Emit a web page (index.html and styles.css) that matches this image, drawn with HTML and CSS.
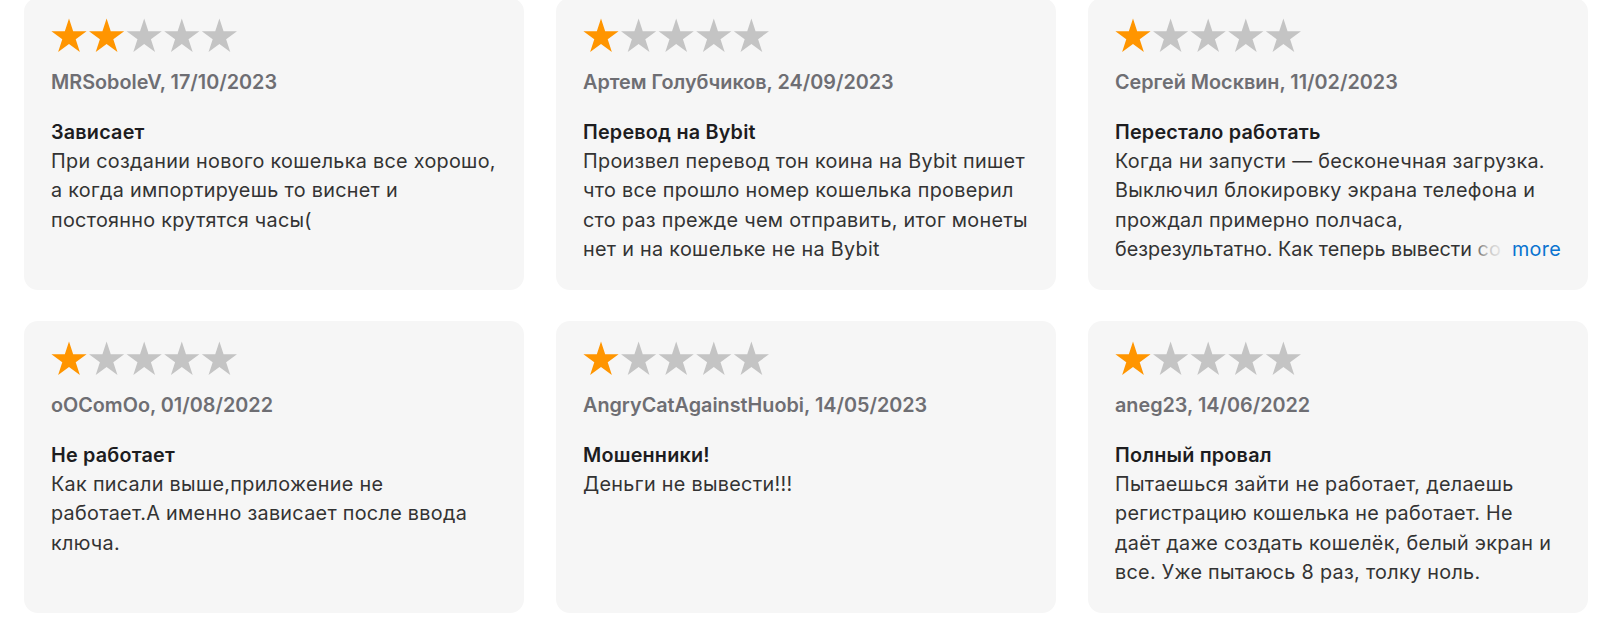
FILE: index.html
```html
<!DOCTYPE html>
<html lang="ru">
<head>
<meta charset="utf-8">
<title>Reviews</title>
<link rel="stylesheet" href="styles.css">
</head>
<body>
<svg width="0" height="0" class="defs" aria-hidden="true">
  <defs>
    <path id="star" d="M18 0.5 L22.16 13.28 L35.59 13.28 L24.72 21.18 L28.87 33.97 L18 26.07 L7.13 33.97 L11.28 21.18 L0.41 13.28 L13.84 13.28 Z"/>
  </defs>
</svg>
<main class="grid">
  <article class="card">
    <svg class="stars" viewBox="0 0 188 35"><use href="#star" x="0" class="on"/><use href="#star" x="37.6" class="on"/><use href="#star" x="75.2" class="off"/><use href="#star" x="112.8" class="off"/><use href="#star" x="150.4" class="off"/></svg>
    <div class="meta">MRSoboleV, 17/10/2023</div>
    <h3 class="title">Зависает</h3>
    <p class="text">При создании нового кошелька все хорошо,<br>а когда импортируешь то виснет и<br>постоянно крутятся часы(</p>
  </article>
  <article class="card">
    <svg class="stars" viewBox="0 0 188 35"><use href="#star" x="0" class="on"/><use href="#star" x="37.6" class="off"/><use href="#star" x="75.2" class="off"/><use href="#star" x="112.8" class="off"/><use href="#star" x="150.4" class="off"/></svg>
    <div class="meta">Артем Голубчиков, 24/09/2023</div>
    <h3 class="title">Перевод на Bybit</h3>
    <p class="text">Произвел перевод тон коина на Bybit пишет<br>что все прошло номер кошелька проверил<br>сто раз прежде чем отправить, итог монеты<br>нет и на кошельке не на Bybit</p>
  </article>
  <article class="card">
    <svg class="stars" viewBox="0 0 188 35"><use href="#star" x="0" class="on"/><use href="#star" x="37.6" class="off"/><use href="#star" x="75.2" class="off"/><use href="#star" x="112.8" class="off"/><use href="#star" x="150.4" class="off"/></svg>
    <div class="meta">Сергей Москвин, 11/02/2023</div>
    <h3 class="title">Перестало работать</h3>
    <div class="clamp">
      <p class="text">Когда ни запусти — бесконечная загрузка.<br>Выключил блокировку экрана телефона и<br>прождал примерно полчаса,<br><span class="last">безрезультатно. Как теперь вывести со</span></p>
      <span class="more">more</span>
    </div>
  </article>
  <article class="card">
    <svg class="stars" viewBox="0 0 188 35"><use href="#star" x="0" class="on"/><use href="#star" x="37.6" class="off"/><use href="#star" x="75.2" class="off"/><use href="#star" x="112.8" class="off"/><use href="#star" x="150.4" class="off"/></svg>
    <div class="meta">oOComOo, 01/08/2022</div>
    <h3 class="title">Не работает</h3>
    <p class="text">Как писали выше,приложение не<br>работает.А именно зависает после ввода<br>ключа.</p>
  </article>
  <article class="card">
    <svg class="stars" viewBox="0 0 188 35"><use href="#star" x="0" class="on"/><use href="#star" x="37.6" class="off"/><use href="#star" x="75.2" class="off"/><use href="#star" x="112.8" class="off"/><use href="#star" x="150.4" class="off"/></svg>
    <div class="meta">AngryCatAgainstHuobi, 14/05/2023</div>
    <h3 class="title">Мошенники!</h3>
    <p class="text">Деньги не вывести!!!</p>
  </article>
  <article class="card">
    <svg class="stars" viewBox="0 0 188 35"><use href="#star" x="0" class="on"/><use href="#star" x="37.6" class="off"/><use href="#star" x="75.2" class="off"/><use href="#star" x="112.8" class="off"/><use href="#star" x="150.4" class="off"/></svg>
    <div class="meta">aneg23, 14/06/2022</div>
    <h3 class="title">Полный провал</h3>
    <p class="text">Пытаешься зайти не работает, делаешь<br>регистрацию кошелька не работает. Не<br>даёт даже создать кошелёк, белый экран и<br>все. Уже пытаюсь 8 раз, толку ноль.</p>
  </article>
</main>
</body>
</html>
```

FILE: styles.css
```css
* { box-sizing: border-box; }
html, body {
  margin: 0;
  padding: 0;
  background: #ffffff;
}
body {
  font-family: Inter, "Noto Sans", "Liberation Sans", sans-serif;
  color: #333333;
  overflow: hidden;
}
.defs { position: absolute; }
.grid {
  display: grid;
  grid-template-columns: repeat(3, 500px);
  column-gap: 32px;
  row-gap: 31px;
  padding: 0 0 0 24px;
  margin-top: -2px;
}
.card {
  background: #f6f6f6;
  border-radius: 14px;
  height: 292px;
  padding: 20px 27px 0 27px;
}
.stars {
  display: block;
  width: 188px;
  height: 35px;
}
.stars .on { fill: #ff9500; }
.stars .off { fill: #c4c4c4; }
.meta {
  margin-top: 15px;
  font-size: 19.8px;
  line-height: 29px;
  font-weight: 600;
  color: #6e6e73;
}
.title {
  margin: 21px 0 0 0;
  font-size: 19.8px;
  line-height: 29px;
  font-weight: 600;
  letter-spacing: 0.2px;
  color: #1d1d1f;
}
.text {
  margin: 0;
  font-size: 19.8px;
  line-height: 29.3px;
  font-weight: 400;
  letter-spacing: 0.3px;
  color: #333333;
  white-space: nowrap;
}
.clamp {
  position: relative;
  height: 118px;
  overflow: hidden;
}
.last { letter-spacing: 0; }
.more {
  position: absolute;
  right: 0;
  top: 88px;
  line-height: 29.3px;
  font-size: 19.8px;
  letter-spacing: 0.3px;
  color: #0a74d0;
  padding-left: 42px;
  background: linear-gradient(to right, rgba(246,246,246,0) 0, rgba(246,246,246,0.75) 18px, #f6f6f6 38px);
}
```
